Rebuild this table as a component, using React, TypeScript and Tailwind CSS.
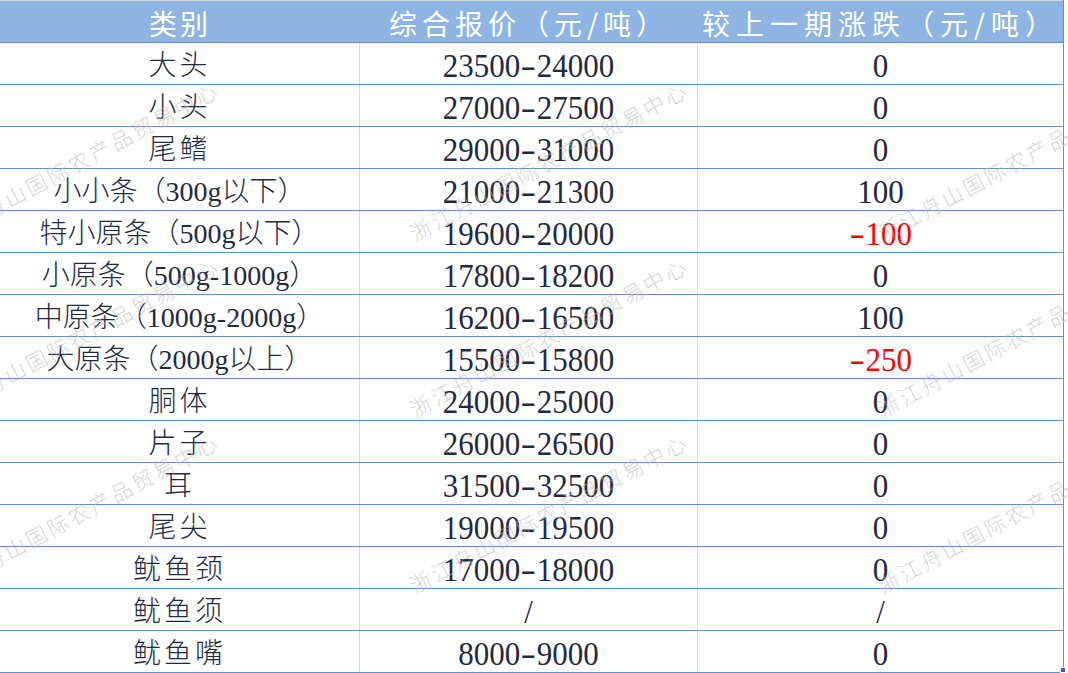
import { Fragment } from "react";

type Row = { name: string; price: string; change: string; down?: boolean };

const rows: Row[] = [
  { name: "大头", price: "23500-24000", change: "0" },
  { name: "小头", price: "27000-27500", change: "0" },
  { name: "尾鳍", price: "29000-31000", change: "0" },
  { name: "小小条（300g以下）", price: "21000-21300", change: "100" },
  { name: "特小原条（500g以下）", price: "19600-20000", change: "-100", down: true },
  { name: "小原条（500g-1000g）", price: "17800-18200", change: "0" },
  { name: "中原条（1000g-2000g）", price: "16200-16500", change: "100" },
  { name: "大原条（2000g以上）", price: "15500-15800", change: "-250", down: true },
  { name: "胴体", price: "24000-25000", change: "0" },
  { name: "片子", price: "26000-26500", change: "0" },
  { name: "耳", price: "31500-32500", change: "0" },
  { name: "尾尖", price: "19000-19500", change: "0" },
  { name: "鱿鱼颈", price: "17000-18000", change: "0" },
  { name: "鱿鱼须", price: "/", change: "/" },
  { name: "鱿鱼嘴", price: "8000-9000", change: "0" },
];

// watermark centres, 3 across x 3 down
const marks = [
  "left-[80px] top-[161px]",
  "left-[549px] top-[161px]",
  "left-[1017px] top-[161px]",
  "left-[80px] top-[337px]",
  "left-[549px] top-[337px]",
  "left-[1017px] top-[337px]",
  "left-[80px] top-[513px]",
  "left-[549px] top-[513px]",
  "left-[1017px] top-[513px]",
];

function Num({ value }: { value: string }) {
  const parts = value.split("-");
  return (
    <span className="inline-block scale-y-110">
      {parts.map((p, i) => (
        <Fragment key={i}>
          {i > 0 && <span className="inline-block scale-x-150 mx-[3px]">-</span>}
          {p}
        </Fragment>
      ))}
    </span>
  );
}

export default function App() {
  return (
    <div className="relative w-[1068px] h-[673px] overflow-hidden bg-white">
      <div className="w-[1064px] border-r border-[#5b8fd6]">
        <div className="grid grid-cols-[360px_338px_365px] h-[43px] bg-[#8db4e2] border-t border-t-[#d4d4d4] border-b border-b-[#5b8fd6] text-white text-[28px] leading-none whitespace-nowrap font-['Noto_Sans_CJK_SC',sans-serif]">
          <div className="flex items-center justify-center pt-[2px] tracking-[3px]">类别</div>
          <div className="flex items-center justify-center pt-[2px] tracking-[5px]">综合报价（元/吨）</div>
          <div className="flex items-center justify-center pt-[2px] tracking-[6px]">较上一期涨跌（元/吨）</div>
        </div>

        {rows.map((r) => {
          const pureCjk = /^[\u4e00-\u9fff]+$/.test(r.name);
          return (
            <div
              key={r.name}
              className="grid grid-cols-[360px_338px_365px] h-[42px] border-b border-[#5b8fd6] text-[#1e2a46] leading-none whitespace-nowrap"
            >
              <div
                className={
                  pureCjk
                    ? "flex items-center justify-center pt-[4px] border-r border-[#d9d9d9] text-[28px] font-light tracking-[3px] font-['Liberation_Serif','Noto_Sans_CJK_SC',sans-serif]"
                    : "flex items-center justify-center pt-[4px] border-r border-[#d9d9d9] text-[28px] font-light font-['Liberation_Serif','Noto_Sans_CJK_SC',sans-serif]"
                }
              >
                {r.name}
              </div>
              <div className="flex items-center justify-center pt-[4px] border-r border-[#d9d9d9] text-[31px] font-['Liberation_Serif',serif]">
                <Num value={r.price} />
              </div>
              <div
                className={
                  r.down
                    ? "flex items-center justify-center pt-[4px] text-[31px] text-[#ff0000] font-['Liberation_Serif',serif]"
                    : "flex items-center justify-center pt-[4px] text-[31px] font-['Liberation_Serif',serif]"
                }
              >
                <Num value={r.change} />
              </div>
            </div>
          );
        })}
      </div>

      <div className="pointer-events-none absolute inset-0">
        {marks.map((pos) => (
          <div
            key={pos}
            className={`absolute ${pos} -translate-x-1/2 -translate-y-1/2 -rotate-[28deg] whitespace-nowrap text-[21px] leading-none tracking-[3px] text-[#b8b8b8] opacity-60 font-light font-['Noto_Sans_CJK_SC',sans-serif]`}
          >
            浙江舟山国际农产品贸易中心
          </div>
        ))}
      </div>

      {/* excel fill handle */}
      <div className="absolute left-[1060px] top-[667px] w-[6px] h-[6px] bg-[#3b5cb8] border border-white" />
    </div>
  );
}
